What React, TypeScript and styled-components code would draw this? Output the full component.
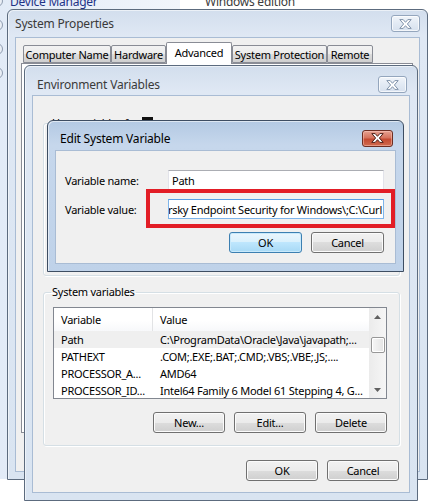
import React from "react";
import styled, { createGlobalStyle } from "styled-components";

const UI_FONT = `"Noto Sans", "Open Sans", "DejaVu Sans", sans-serif`;

const GlobalStyle = createGlobalStyle`
  html, body {
    margin: 0;
    padding: 0;
    background: #fff;
  }
  body {
    font-family: ${UI_FONT};
    font-size: 11px;
    color: #000;
  }
  * {
    box-sizing: border-box;
  }
`;

const Desktop = styled.div`
  position: relative;
  width: 429px;
  height: 501px;
  overflow: hidden;
  display: flex;
  background: #fff;
  font-family: ${UI_FONT};
  font-size: 11px;
  letter-spacing: -0.25px;
`;

/* control panel behind the dialogs */
const NavPane = styled.div`
  width: 180px;
  height: 486px;
  display: flex;
  flex-direction: column;
  gap: 8px;
  margin-top: -7px;
  background: linear-gradient(to right, #e2ebf7, #f1f5fb);
  font-size: 12px;
`;

const NavItem = styled.div`
  display: flex;
  align-items: center;
  height: 16px;
  color: #1e3287;
  white-space: nowrap;
`;

const NavIcon = styled.span`
  width: 12px;
  height: 12px;
  margin-left: -9px;
  border-radius: 50%;
  border: 1px solid #8f9cb0;
  background: #e9eef5;
`;

const NavText = styled.span`
  margin-left: 7px;
`;

const MainPane = styled.div`
  flex: 1;
  padding-left: 25px;
  margin-top: -7px;
  color: #3c3c3c;
  font-size: 12px;
  white-space: nowrap;
`;

/* window chrome */
const Window = styled.div<{ $x: number; $y: number; $w: number; $h: number; $active?: boolean }>`
  position: absolute;
  left: ${p => p.$x}px;
  top: ${p => p.$y}px;
  width: ${p => p.$w}px;
  height: ${p => p.$h}px;
  display: flex;
  flex-direction: column;
  padding: 0 7px 7px;
  border: 1px solid ${p => (p.$active ? "#3d4d62" : "#5c6b7e")};
  border-radius: 6px 6px 0 0;
  background: ${p =>
    p.$active
      ? "linear-gradient(to bottom, #b3c9e3 0px, #c6d7ec 24px, #bfd2e9 100%)"
      : "linear-gradient(to bottom, #d2deed 0px, #dfe8f4 26px, #d9e4f1 100%)"};
  box-shadow: inset 1px 1px 0 rgba(255, 255, 255, 0.55);
`;

const TitleBar = styled.div<{ $h: number; $pt: number; $pr: number }>`
  height: ${p => p.$h}px;
  flex: none;
  display: flex;
  align-items: center;
  justify-content: space-between;
  padding: ${p => p.$pt}px ${p => p.$pr}px 0 5px;
`;

const Title = styled.span<{ $active?: boolean }>`
  color: ${p => (p.$active ? "#000" : "#3a3a3a")};
  font-size: 12px;
  letter-spacing: -0.2px;
  white-space: nowrap;
`;

const CloseButton = styled.div<{ $active?: boolean; $w: number }>`
  width: ${p => p.$w}px;
  height: 17px;
  display: flex;
  align-items: center;
  justify-content: center;
  border-radius: 3px;
  border: 1px solid ${p => (p.$active ? "#6d2e23" : "#94a6bd")};
  background: ${p =>
    p.$active
      ? "linear-gradient(to bottom, #e6a292 0%, #d6735d 45%, #c44a31 55%, #d06a4e 100%)"
      : "linear-gradient(to bottom, #f1f5fa 0%, #e2eaf4 50%, #d7e1ee 100%)"};
  box-shadow: inset 0 0 0 1px ${p => (p.$active ? "rgba(255,210,200,0.45)" : "rgba(255,255,255,0.7)")};
`;

const XGlyph = ({ active }: { active?: boolean }) => (
  <svg width="13" height="10" viewBox="0 0 13 10">
    <path
      d="M0.8 0.6h3.4L6.5 3.3 8.8 0.6h3.4L8.4 5l3.8 4.4H8.8L6.5 6.7 4.2 9.4H0.8L4.6 5z"
      fill="#fff"
      stroke={active ? "#4e2018" : "#8193aa"}
      strokeWidth="1"
      strokeLinejoin="round"
    />
  </svg>
);

const Client = styled.div<{ $pad: string }>`
  position: relative;
  flex: 1;
  display: flex;
  flex-direction: column;
  padding: ${p => p.$pad};
  background: #f0f0f0;
  border: 1px solid #a9bcd4;
`;

/* tabs of System Properties */
const TabStrip = styled.div`
  display: flex;
  align-items: flex-end;
  height: 21px;
  margin-left: 1px;
`;

const Tab = styled.div<{ $selected?: boolean; $w: number }>`
  width: ${p => p.$w}px;
  height: ${p => (p.$selected ? 22 : 18)}px;
  margin-bottom: ${p => (p.$selected ? -1 : 0)}px;
  display: flex;
  align-items: center;
  justify-content: center;
  padding-bottom: ${p => (p.$selected ? 3 : 0)}px;
  border: 1px solid #898c95;
  border-bottom: ${p => (p.$selected ? "none" : "1px solid #898c95")};
  border-radius: 2px 2px 0 0;
  background: ${p =>
    p.$selected
      ? "#fff"
      : "linear-gradient(to bottom, #f3f3f3 0%, #ebebeb 50%, #dddddd 50%, #cfcfcf 100%)"};
  position: relative;
  z-index: ${p => (p.$selected ? 1 : 0)};
  white-space: nowrap;
`;

const TabPanel = styled.div`
  flex: 1;
  margin: 0 0 38px -1px;
  border: 1px solid #898c95;
  background: #fff;
`;

/* group boxes */
const Group = styled.fieldset<{ $h?: number; $mt?: number }>`
  margin: ${p => p.$mt ?? 0}px 0 0;
  padding: 0 12px 12px 9px;
  height: ${p => (p.$h ? `${p.$h}px` : "auto")};
  flex: none;
  border: 1px solid #d5dfe5;
  border-radius: 3px;
  box-shadow: inset 1px 1px 0 #fff, 1px 1px 0 #fff;
  min-width: 0;
  display: flex;
  flex-direction: column;
`;

const Legend = styled.legend`
  margin-left: -2px;
  padding: 0 1px;
  line-height: 16px;
  height: 16px;
  white-space: nowrap;
`;

const Redacted = styled.span`
  display: inline-block;
  width: 11px;
  height: 11px;
  margin-left: 3px;
  vertical-align: -1px;
  background: #111;
`;

/* list view */
const ListView = styled.div`
  margin-top: 7px;
  height: 92px;
  display: flex;
  border: 1px solid #828790;
  background: #fff;
  overflow: hidden;
`;

const Table = styled.div`
  flex: 1;
  min-width: 0;
  display: flex;
  flex-direction: column;
`;

const HeaderRow = styled.div`
  height: 23px;
  flex: none;
  display: grid;
  grid-template-columns: 99px 1fr;
  background: linear-gradient(to bottom, #fff 0%, #fff 55%, #f7f8fa 100%);
`;

const HeaderCell = styled.div<{ $sep?: boolean }>`
  display: flex;
  align-items: center;
  padding-left: 7px;
  border-right: ${p => (p.$sep ? "1px solid #e2e3e5" : "none")};
`;

const Row = styled.div<{ $selected?: boolean }>`
  height: 17px;
  flex: none;
  display: grid;
  grid-template-columns: 99px 1fr;
  background: ${p => (p.$selected ? "#efefef" : "#fff")};
`;

const Cell = styled.div`
  display: flex;
  align-items: center;
  padding-left: 7px;
  white-space: nowrap;
  overflow: hidden;
`;

const ScrollBar = styled.div`
  width: 17px;
  flex: none;
  display: flex;
  flex-direction: column;
  background: linear-gradient(to right, #ebebeb, #f6f6f6);
`;

const ScrollArrow = styled.div`
  height: 17px;
  flex: none;
  display: flex;
  align-items: center;
  justify-content: center;
`;

const ScrollTrack = styled.div`
  flex: 1;
  padding: 12px 1px 0 2px;
`;

const Thumb = styled.div`
  height: 16px;
  border: 1px solid #979797;
  border-radius: 2px;
  background: linear-gradient(to right, #f6f6f6, #e4e4e4);
  box-shadow: inset 0 0 0 1px #fff;
`;

const Arrow = ({ up }: { up?: boolean }) => (
  <svg width="7" height="4" viewBox="0 0 7 4">
    <polygon points={up ? "0,4 7,4 3.5,0" : "0,0 7,0 3.5,4"} fill="#606060" />
  </svg>
);

/* buttons */
const ButtonRow = styled.div<{ $mt: number; $pr?: number }>`
  display: flex;
  justify-content: flex-end;
  gap: 9px;
  margin-top: ${p => p.$mt}px;
  padding-right: ${p => p.$pr ?? 0}px;
`;

const Button = styled.div<{ $w: number; $default?: boolean }>`
  width: ${p => p.$w}px;
  height: 21px;
  display: flex;
  align-items: center;
  justify-content: center;
  border: 1px solid ${p => (p.$default ? "#3c7fb1" : "#707070")};
  border-radius: 3px;
  background: ${p =>
    p.$default
      ? "linear-gradient(to bottom, #eaf6fd 0%, #d9f0fc 50%, #bee6fd 50%, #a7d9f5 100%)"
      : "linear-gradient(to bottom, #f2f2f2 0%, #ebebeb 50%, #dddddd 50%, #cfcfcf 100%)"};
  box-shadow: inset 0 0 0 1px ${p => (p.$default ? "#c8e9fb" : "#fbfbfb")};
  white-space: nowrap;
`;

/* edit dialog form */
const Form = styled.div`
  display: grid;
  grid-template-columns: 103px 1fr;
  row-gap: 9px;
  align-items: center;
`;

const Label = styled.span`
  white-space: nowrap;
`;

const TextBox = styled.div<{ $focused?: boolean }>`
  height: 20px;
  display: flex;
  align-items: center;
  justify-content: ${p => (p.$focused ? "flex-end" : "flex-start")};
  padding: 0 1px 0 3px;
  overflow: hidden;
  white-space: nowrap;
  background: #fff;
  border: 1px solid ${p => (p.$focused ? "#7eb4ea" : "#e2e3ea")};
  border-top-color: ${p => (p.$focused ? "#569de5" : "#abadb3")};
`;

const Annotation = styled.div`
  position: absolute;
  left: 90px;
  top: 38px;
  width: 249px;
  height: 39px;
  border: 4px solid #e21d26;
  pointer-events: none;
`;

const tabs = [
  { label: "Computer Name", w: 88 },
  { label: "Hardware", w: 55 },
  { label: "Advanced", w: 66, selected: true },
  { label: "System Protection", w: 95 },
  { label: "Remote", w: 46 },
];

const systemVars = [
  { name: "Path", value: "C:\\ProgramData\\Oracle\\Java\\javapath;...", selected: true },
  { name: "PATHEXT", value: ".COM;.EXE;.BAT;.CMD;.VBS;.VBE;.JS;...." },
  { name: "PROCESSOR_A...", value: "AMD64" },
  { name: "PROCESSOR_ID...", value: "Intel64 Family 6 Model 61 Stepping 4, G..." },
];

const pathValue =
  "C:\\Program Files (x86)\\Kaspersky Lab\\Kaspersky Endpoint Security for Windows\\;C:\\Curl";

const App = () => {
  return (
    <>
      <GlobalStyle />
      <Desktop>
        <NavPane>
          <NavItem>
            <NavIcon />
            <NavText>Device Manager</NavText>
          </NavItem>
          <NavItem>
            <NavIcon />
            <NavText>Remote settings</NavText>
          </NavItem>
          <NavItem>
            <NavIcon />
            <NavText>System protection</NavText>
          </NavItem>
          <NavItem>
            <NavIcon />
            <NavText>Advanced system settings</NavText>
          </NavItem>
        </NavPane>
        <MainPane>Windows edition</MainPane>

        <Window $x={7} $y={9} $w={421} $h={471}>
          <TitleBar $h={27} $pt={3} $pr={-1}>
            <Title>System Properties</Title>
            <CloseButton $w={29}>
              <XGlyph />
            </CloseButton>
          </TitleBar>
          <Client $pad="4px 6px 0 6px">
            <TabStrip>
              {tabs.map(t => (
                <Tab key={t.label} $w={t.w} $selected={t.selected}>
                  {t.label}
                </Tab>
              ))}
            </TabStrip>
            <TabPanel />
          </Client>
        </Window>

        <Window $x={24} $y={65} $w={394} $h={436}>
          <TitleBar $h={29} $pt={8} $pr={3}>
            <Title>Environment Variables</Title>
            <CloseButton $w={29}>
              <XGlyph />
            </CloseButton>
          </TitleBar>
          <Client $pad="19px 9px 0 10px">
            <Group $h={161}>
              <Legend>
                User variables for
                <Redacted />
              </Legend>
            </Group>
            <Group $mt={8}>
              <Legend>System variables</Legend>
              <ListView>
                <Table>
                  <HeaderRow>
                    <HeaderCell $sep>Variable</HeaderCell>
                    <HeaderCell>Value</HeaderCell>
                  </HeaderRow>
                  {systemVars.map(v => (
                    <Row key={v.name} $selected={v.selected}>
                      <Cell>{v.name}</Cell>
                      <Cell>{v.value}</Cell>
                    </Row>
                  ))}
                </Table>
                <ScrollBar>
                  <ScrollArrow>
                    <Arrow up />
                  </ScrollArrow>
                  <ScrollTrack>
                    <Thumb />
                  </ScrollTrack>
                  <ScrollArrow>
                    <Arrow />
                  </ScrollArrow>
                </ScrollBar>
              </ListView>
              <ButtonRow $mt={13}>
                <Button $w={72}>New...</Button>
                <Button $w={72}>Edit...</Button>
                <Button $w={72}>Delete</Button>
              </ButtonRow>
            </Group>
            <ButtonRow $mt={14} $pr={1}>
              <Button $w={72}>OK</Button>
              <Button $w={72}>Cancel</Button>
            </ButtonRow>
          </Client>
        </Window>

        <Window $x={47} $y={120} $w={357} $h={152} $active>
          <TitleBar $h={29} $pt={5} $pr={3}>
            <Title $active>Edit System Variable</Title>
            <CloseButton $w={31} $active>
              <XGlyph active />
            </CloseButton>
          </TitleBar>
          <Client $pad="19px 11px 0 9px">
            <Form>
              <Label>Variable name:</Label>
              <TextBox>Path</TextBox>
              <Label>Variable value:</Label>
              <TextBox $focused>
                <span>{pathValue}</span>
              </TextBox>
            </Form>
            <ButtonRow $mt={13}>
              <Button $w={73} $default>
                OK
              </Button>
              <Button $w={73}>Cancel</Button>
            </ButtonRow>
            <Annotation />
          </Client>
        </Window>
      </Desktop>
    </>
  );
};

export default App;
